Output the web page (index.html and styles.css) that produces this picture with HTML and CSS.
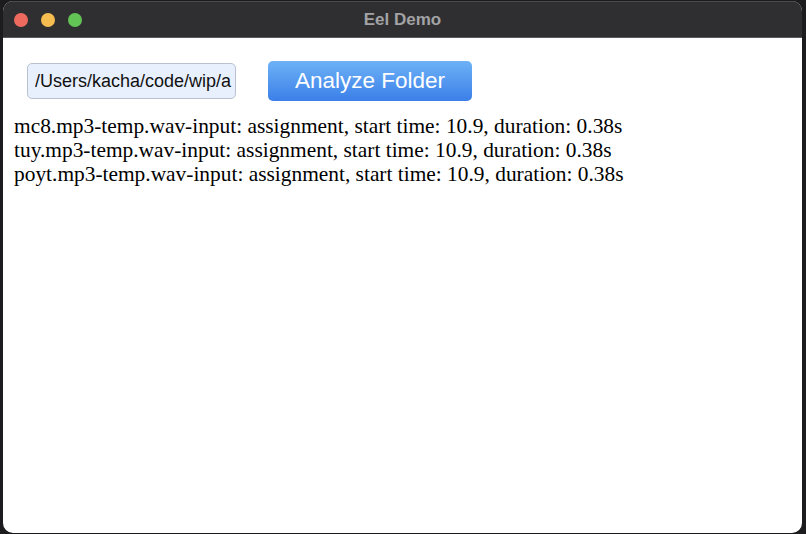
FILE: index.html
```html
<!DOCTYPE html>
<html>
<head>
<meta charset="utf-8">
<title>Eel Demo</title>
<link rel="stylesheet" href="styles.css">
</head>
<body>
<div class="window">
  <div class="titlebar">
    <div class="lights">
      <span class="light red"></span>
      <span class="light yellow"></span>
      <span class="light green"></span>
    </div>
    <div class="title">Eel Demo</div>
  </div>
  <div class="content">
    <div class="controls">
      <input class="path" type="text" value="/Users/kacha/code/wip/a">
      <button class="analyze">Analyze Folder</button>
    </div>
    <div class="results">
      <div class="line">mc8.mp3-temp.wav-input: assignment, start time: 10.9, duration: 0.38s</div>
      <div class="line">tuy.mp3-temp.wav-input: assignment, start time: 10.9, duration: 0.38s</div>
      <div class="line">poyt.mp3-temp.wav-input: assignment, start time: 10.9, duration: 0.38s</div>
    </div>
  </div>
</div>
</body>
</html>
```

FILE: styles.css
```css
html, body {
  margin: 0;
  padding: 0;
  height: 100%;
  background: #1c1c1e;
}
body {
  padding: 1px 4px 1px 3px;
  box-sizing: border-box;
  display: flex;
}
.window {
  flex: 1;
  display: flex;
  flex-direction: column;
  background: #ffffff;
  border-radius: 10px;
  overflow: hidden;
}
.titlebar {
  flex: none;
  background: #2f2f31;
  border-top: 1px solid #4a4a4c;
  border-bottom: 1px solid #5a5a5c;
  box-sizing: border-box;
  height: 37px;
  display: flex;
  align-items: center;
  position: relative;
}
.lights {
  display: flex;
  gap: 13px;
  padding-left: 11px;
}
.light {
  width: 14px;
  height: 14px;
  border-radius: 50%;
  display: block;
}
.red { background: #ee6a5f; }
.yellow { background: #f5bd4f; }
.green { background: #61c454; }
.title {
  position: absolute;
  left: 0;
  right: 0;
  text-align: center;
  font-family: "Liberation Sans", Arial, sans-serif;
  font-weight: bold;
  font-size: 17px;
  color: #a3a3a5;
}
.content {
  flex: 1;
  padding: 0 0 0 11px;
}
.controls {
  display: flex;
  align-items: center;
  padding: 23px 0 0 13px;
  gap: 32px;
}
.path {
  width: 209px;
  height: 36px;
  box-sizing: border-box;
  background: #e8f0fe;
  border: 1px solid #b8c1cf;
  border-radius: 5px;
  padding: 0 1px 0 7px;
  font-family: "Liberation Sans", Arial, sans-serif;
  font-size: 18px;
  color: #111;
  outline: none;
}
.analyze {
  width: 204px;
  height: 40px;
  border: none;
  border-radius: 5px;
  background: linear-gradient(#6db2f6, #3b7fe9);
  color: #ffffff;
  font-family: "Liberation Sans", Arial, sans-serif;
  font-size: 22.5px;
  padding: 0;
}
.results {
  padding-top: 13px;
  font-family: "Liberation Serif", "Times New Roman", serif;
  font-size: 21.4px;
  line-height: 24px;
  color: #000;
}
```
